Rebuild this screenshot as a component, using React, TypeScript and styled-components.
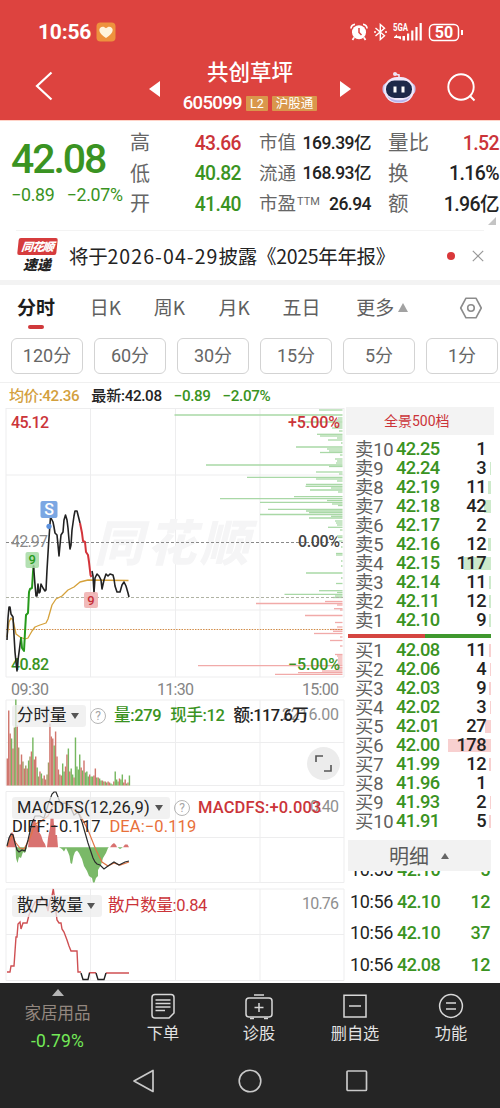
import React from "react";
import styled, { createGlobalStyle } from "styled-components";

const RED = "#cb3439";
const GREEN = "#3a9322";
const INK = "#232323";
const GREY = "#666";

const Global = createGlobalStyle`
  * { box-sizing: border-box; }
  body { margin: 0; background: #fff; overflow: hidden; }
`;

const Screen = styled.div`
  width: 500px;
  height: 1108px;
  display: flex;
  flex-direction: column;
  background: #fff;
  color: ${INK};
  font-family: Roboto, "Noto Sans CJK SC", sans-serif;
  overflow: hidden;
  white-space: nowrap;
`;

const Num = styled.span<{ $size: number; $color?: string; $weight?: number; $ls?: number }>`
  font-size: ${(p) => p.$size}px;
  line-height: 1;
  color: ${(p) => p.$color ?? "inherit"};
  font-weight: ${(p) => p.$weight ?? 500};
  letter-spacing: ${(p) => p.$ls ?? -0.03}em;
`;

/* ---------- header ---------- */
const Header = styled.header`
  height: 121px;
  flex: none;
  background: #dd433f;
  border-bottom: 1px solid #ffd3c8;
  color: #fff;
`;
const StatusBar = styled.div`
  height: 62px;
  padding: 2px 36px 0 38px;
  display: flex;
  align-items: center;
  justify-content: space-between;
`;
const StatusGroup = styled.div`
  display: flex;
  align-items: center;
  gap: 5px;
`;
const TitleBar = styled.div`
  height: 58px;
  display: grid;
  grid-template-columns: 149px 202px 149px;
`;
const TitleSide = styled.div<{ $pad: string; $gap?: number }>`
  display: flex;
  align-items: center;
  gap: ${(p) => p.$gap ?? 0}px;
  padding: ${(p) => p.$pad};
`;
const TitleCenter = styled.div`
  display: flex;
  align-items: center;
  justify-content: space-between;
  > svg { margin-top: -2px; }
`;
const TitleStack = styled.div`
  height: 58px;
  display: flex;
  flex-direction: column;
  align-items: center;
`;
const StockName = styled.h1`
  margin: 0;
  font-size: 21.5px;
  line-height: 22px;
  font-weight: 500;
`;
const CodeRow = styled.div`
  display: flex;
  align-items: center;
  gap: 3px;
  height: 20px;
  margin-top: 9px;
`;
const Badge = styled.span`
  height: 15px;
  padding: 0 4px;
  margin-left: 1px;
  background: #d9974c;
  border-radius: 1px;
  font-size: 12.5px;
  line-height: 15px;
`;

/* ---------- quote ---------- */
const Quote = styled.section`
  height: 109px;
  flex: none;
  display: grid;
  grid-template-columns: 130px 111px 18px 112px 17px 111px;
  position: relative;
`;
const PriceBlock = styled.div`
  padding: 18px 0 0 11px;
  color: ${GREEN};
`;
const Changes = styled.div`
  display: flex;
  gap: 12px;
  margin-top: 6px;
`;
const StatCol = styled.div`
  padding-top: 7px;
  display: flex;
  flex-direction: column;
`;
const StatRow = styled.div<{ $label: number }>`
  height: 30.5px;
  display: flex;
  align-items: center;
  justify-content: space-between;
  color: ${INK};
  > label {
    color: ${GREY};
    font-size: ${(p) => p.$label}px;
    line-height: 1;
  }
  sup { font-size: 11px; line-height: 1; vertical-align: 5px; margin-left: 1px; }
`;
const Corner = styled.i`
  position: absolute;
  right: 4px;
  bottom: 5px;
  border-left: 8px solid transparent;
  border-bottom: 8px solid #c4c4c4;
`;

/* ---------- news ---------- */
const News = styled.section`
  height: 50px;
  flex: none;
  margin: 0 16px;
  border-top: 1px solid #f3f3f3;
  display: flex;
  align-items: center;
`;
const NewsText = styled.p`
  margin: 0 0 0 11px;
  flex: 1;
  font-size: 19.5px;
  line-height: 24px;
  font-family: "Noto Sans CJK SC", sans-serif;
  letter-spacing: -0.3px;
  em { font-style: normal; letter-spacing: 1.1px; }
`;
const NewsLogo = styled.div`
  width: 42px;
  display: flex;
  flex-direction: column;
  align-items: center;
  font-family: "Noto Sans CJK SC", sans-serif;
  font-weight: 900;
  font-style: italic;
`;
const LogoTop = styled.span`
  width: 39px;
  height: 17px;
  background: #d63c3d;
  color: #fff;
  border-radius: 2px;
  transform: skewX(-6deg);
  font-size: 11.5px;
  line-height: 16px;
  letter-spacing: -0.8px;
  text-align: center;
`;
const LogoBottom = styled.span`
  font-size: 14px;
  line-height: 18px;
`;
const Dot = styled.i`
  width: 8px;
  height: 8px;
  border-radius: 50%;
  background: #d9383a;
  margin-right: 17px;
`;
const Band = styled.div`
  height: 5px;
  flex: none;
  background: #f3f3f3;
`;

/* ---------- tabs ---------- */
const Tabs = styled.nav`
  height: 53px;
  flex: none;
  display: flex;
  align-items: flex-start;
  padding: 12px 17px 0;
`;
const Tab = styled.div<{ $w: number; $on?: boolean }>`
  width: ${(p) => p.$w}px;
  font-size: 19px;
  line-height: 20px;
  font-weight: ${(p) => (p.$on ? 700 : 400)};
  color: ${(p) => (p.$on ? "#1d1d1d" : "#606060")};
  font-family: "Noto Sans CJK SC", sans-serif;
  &::after {
    content: "";
    display: ${(p) => (p.$on ? "block" : "none")};
    width: 16px;
    height: 4px;
    margin: 8px 0 0 11px;
    border-radius: 2px;
    background: #d0393b;
  }
`;
const Up = styled.i<{ $w: number; $h: number; $color: string }>`
  display: inline-block;
  border: ${(p) => p.$w / 2}px solid transparent;
  border-top: 0;
  border-bottom: ${(p) => p.$h}px solid ${(p) => p.$color};
`;
const MoreArrow = styled(Up)`
  margin-left: 4px;
  vertical-align: 3px;
`;
const Down = styled.i`
  border: 4.5px solid transparent;
  border-bottom: 0;
  border-top: 6px solid #555;
`;
const Periods = styled.div`
  height: 45px;
  flex: none;
  display: flex;
  gap: 11px;
  padding-left: 11px;
  border-bottom: 1px solid #f0f0f0;
`;
const Period = styled.button`
  flex: none;
  width: 72px;
  height: 36px;
  padding: 0;
  background: #fff;
  border: 1px solid #d3d3d3;
  border-radius: 6px;
  color: ${GREY};
  font-family: Roboto, "Noto Sans CJK SC", sans-serif;
  font-size: 18px;
  line-height: 34px;
`;
const Averages = styled.div`
  height: 24px;
  flex: none;
  display: flex;
  align-items: center;
  gap: 12px;
  padding: 3px 0 0 9px;
`;

/* ---------- charts ---------- */
const Body = styled.main`
  height: 576px;
  flex: none;
  display: grid;
  grid-template-columns: 346px 148px;
  overflow: hidden;
`;
const Charts = styled.div`
  display: flex;
  flex-direction: column;
`;
const Pane = styled.div<{ $h: number }>`
  height: ${(p) => p.$h}px;
  flex: none;
  position: relative;
  svg { display: block; }
`;
const Legend = styled.div<{ $top: number }>`
  position: absolute;
  left: 12px;
  top: ${(p) => p.$top}px;
  display: flex;
  align-items: center;
  font-size: 16.5px;
  line-height: 22px;
`;
const Chip = styled.span<{ $w: number; $ls?: number }>`
  width: ${(p) => p.$w}px;
  height: 22px;
  display: flex;
  align-items: center;
  justify-content: space-between;
  padding: 0 7px 0 5px;
  border-radius: 3px;
  background: rgba(236, 236, 236, 0.75);
  letter-spacing: ${(p) => p.$ls ?? 0}px;
`;
const Help = styled.span`
  width: 16px;
  height: 16px;
  border: 1px solid #b5b5b5;
  border-radius: 50%;
  color: #a5a5a5;
  font-size: 12px;
  line-height: 14px;
  text-align: center;
  margin: 0 8px 0 4px;
`;
const Item = styled.span<{ $color: string; $ml?: number; $ls?: number; $weight?: number }>`
  color: ${(p) => p.$color};
  margin-left: ${(p) => p.$ml ?? 0}px;
  letter-spacing: ${(p) => p.$ls ?? -0.35}px;
  font-size: 16.5px;
  font-weight: ${(p) => p.$weight ?? 500};
`;
const Expand = styled.button`
  position: absolute;
  right: 6px;
  top: 48px;
  width: 33px;
  height: 33px;
  padding: 0;
  border: 0;
  border-radius: 50%;
  background: #ececec;
  display: grid;
  place-items: center;
`;

/* ---------- order book ---------- */
const Side = styled.aside`
  display: flex;
  flex-direction: column;
  padding-left: 2px;
`;
const Panorama = styled.div`
  height: 28px;
  margin-left: -2px;
  background: #f3f3f3;
  color: ${RED};
  font-size: 14px;
  line-height: 28px;
  padding-left: 38px;
`;
const Book = styled.div<{ $top: number }>`
  padding: ${(p) => p.$top}px 3px 0 0;
`;
const Level = styled.div`
  height: 19px;
  display: grid;
  grid-template-columns: 41px 48px 1fr;
  align-items: center;
  padding-left: 7px;
`;
const LevelName = styled.span`
  color: #606060;
  font-size: 18.4px;
  line-height: 19px;
  letter-spacing: -0.2px;
`;
const Depth = styled.span<{ $w: number; $color: string }>`
  height: 13px;
  display: flex;
  align-items: center;
  justify-content: flex-end;
  padding-right: 5px;
  background: linear-gradient(${(p) => p.$color}, ${(p) => p.$color}) right / ${(p) => p.$w}px 100% no-repeat;
`;
const Ratio = styled.div`
  height: 4px;
  margin: 4px 3px 0 0;
  background: linear-gradient(90deg, #d54541 53.5%, #3f982e 53.5%);
`;
const DetailHead = styled.div`
  height: 31px;
  flex: none;
  margin: 9px 3px 0 0;
  background: #f2f2f2;
  display: flex;
  align-items: center;
  gap: 12px;
  padding-left: 41px;
  font-size: 20px;
  color: #5b5b5b;
`;
const Trades = styled.div`
  flex: 1;
  min-height: 0;
  overflow: hidden;
  margin-right: 3px;
`;
const TradeList = styled.div`
  margin-top: -16.5px;
`;
const Trade = styled.div`
  height: 31.5px;
  display: grid;
  grid-template-columns: 47px 45px 1fr;
  align-items: center;
  padding: 0 1px 0 2px;
  > :last-child { text-align: right; }
`;

/* ---------- footer ---------- */
const Footer = styled.footer`
  height: 125px;
  flex: none;
  background: #252525;
  color: #e2e2e2;
`;
const Actions = styled.div`
  height: 72px;
  display: grid;
  grid-template-columns: 115px repeat(4, 96px);
`;
const Sector = styled.div`
  display: flex;
  flex-direction: column;
  align-items: center;
  padding-top: 6px;
`;
const SectorName = styled.span`
  color: #93877f;
  font-size: 16.5px;
  line-height: 20px;
  margin: 8px 0 9px;
`;
const Action = styled.div`
  display: flex;
  flex-direction: column;
  align-items: center;
  font-size: 16.2px;
  line-height: 20px;
  gap: 4px;
  padding-top: 8px;
  svg { display: block; }
`;
const SystemNav = styled.div`
  height: 53px;
  display: grid;
  grid-template-columns: repeat(3, 106.5px);
  justify-content: center;
  justify-items: center;
  padding: 14px 0 0;
`;

type Pt = [number, number];
const path = (pts: Pt[]) => "M" + pts.map((p) => p.join(" ")).join("L");

const open: Pt[] = [[7, 640], [8, 618], [9, 607], [10, 607], [11, 614], [13, 617], [14, 635], [15, 652], [16, 662], [17, 671], [18, 660], [20, 645], [21, 637]];
const rise: Pt[] = [[21, 637], [22, 648], [24, 651], [25, 632], [26, 615], [28, 613], [29, 592], [30, 589], [32, 588], [33, 572], [33.5, 566]];
const mid: Pt[] = [[33.5, 565], [35, 585], [36, 596], [37, 596], [38, 584], [39, 593], [40, 592], [41, 584], [43, 588], [45, 591], [46, 590], [47, 570], [48.5, 545], [50, 524], [50.5, 517], [52, 520], [53, 522], [54, 527], [55, 533], [57, 535], [58, 545], [59, 556], [60, 545], [61, 535], [63, 532], [64, 520], [65.5, 515], [67, 520], [68, 528], [69, 540], [70, 549], [71, 545], [72, 530], [74, 516], [75, 511], [77, 511], [78, 515], [80, 523]];
const fall: Pt[] = [[80, 523], [82, 533], [83, 541], [85, 542], [86, 552], [88, 555], [89, 562], [90.5, 575], [91.5, 577]];
const tail: Pt[] = [[92, 571], [93, 576], [94, 593], [95, 578], [97, 574], [99, 576], [101, 580], [102, 589], [104, 580], [106, 574], [108, 576], [110, 574], [113, 575], [114, 579], [115, 586], [117, 592], [120, 592], [122, 585], [124, 582], [126, 586], [128, 593], [129, 597]];
const average: Pt[] = [[7, 637], [9, 622], [11, 618], [13, 620], [16, 634], [20, 637], [25, 639], [28, 638], [32, 631], [35, 627], [40, 625], [46, 623], [48, 619], [52, 605], [56, 599], [62, 596], [68, 590], [74, 587], [80, 582], [88, 580], [128.5, 580.5]];

/* resting orders: y position and left end of each bar */
const asks: Pt[] = [[410, 319], [415, 174.5], [418, 338], [420, 336], [422, 300], [424, 338], [426, 336], [428, 332], [431, 339], [434.3, 317], [436, 320], [438, 337], [440, 328], [443, 341], [447, 296], [449, 327], [451, 329], [452.5, 320], [455, 340], [459, 335], [461, 337], [463, 336], [465, 206], [466.5, 329], [472, 316], [474, 339], [477.3, 247], [479, 316], [481, 337], [484.5, 306], [486.3, 305.5], [488, 331], [490, 310], [492, 338], [496.7, 294], [498.7, 220], [500.5, 327], [502.3, 260], [504, 332], [505.5, 338], [509.3, 268], [511, 306], [512.7, 309], [514.5, 260], [516.3, 331], [518, 309], [521, 335], [523, 336], [525, 337], [527.3, 328], [530, 340], [536, 337], [537.5, 338], [541, 339], [547, 341], [553.5, 336], [555, 336], [561, 341], [566, 341], [573, 306], [578, 341], [583.5, 336], [590.7, 319], [592.5, 337], [594.3, 284.5], [596, 335], [597.5, 333]];
const bids: Pt[] = [[601.5, 325], [603.5, 256], [605, 337], [608.7, 334], [610, 340], [615.5, 305], [622.5, 335], [627, 337], [629.5, 330], [631.3, 333], [633.5, 314], [637, 340], [640.5, 330], [646, 340], [654.5, 335], [656, 337], [658, 338], [660, 337], [662, 338], [664, 337], [665.7, 198], [667.5, 337], [669, 338], [671, 322], [672.7, 298], [674.3, 275]];

const volumes = [27, 75, 52, 47, 37, 58, 86, 60, 38, 21, 31, 24, 17, 20, 17, 25, 29, 34, 48, 26, 29, 18, 9, 14, 12, 7, 10, 6, 11, 23, 62, 49, 47, 40, 54, 29, 16, 11, 10, 22, 14, 19, 31, 37, 14, 17, 11, 8, 48, 19, 16, 31, 18, 15, 25, 13, 14, 9, 11, 9, 9, 10, 17, 8, 8, 7, 5, 5, 4, 4, 3, 4, 3, 2, 1, 4, 14, 6, 4, 7, 6, 11, 3, 6, 2, 3, 10];
const volumeIsUp = "111010010110101001011001001100111011101001101001000010100010011010010101100100010011010";

const diff: Pt[] = [[7, 846], [9, 838], [11, 834], [13, 835], [15, 843], [17, 850], [19, 852], [22, 850], [25, 851], [28, 840], [32, 823], [35, 816], [40, 816], [44, 818], [48, 805], [52, 794], [54, 792], [56, 792], [58, 797], [61, 805], [65, 803], [70, 806], [74, 815], [78, 812], [82, 822], [88, 843], [93, 858], [95, 862], [97, 864], [100, 865], [104, 869], [108, 866], [114, 862], [119, 865], [125, 862], [129, 861]];
const dea: Pt[] = [[7, 847], [12, 836], [16, 843], [20, 848], [24, 849], [30, 838], [35, 824], [40, 822], [48, 816], [53, 805], [58, 802], [66, 802], [72, 808], [80, 815], [88, 830], [96, 850], [102, 862], [108, 866], [114, 863], [120, 865], [129, 862]];

function Grid({ top, bottom, lines }: { top: number; bottom: number; lines: number[] }) {
  return (
    <g stroke="#ededee" strokeWidth={1} fill="none">
      {[6, 90.5, 175.5, 260, 344].map((x) => (
        <line key={x} x1={x} x2={x} y1={top} y2={bottom} />
      ))}
      {lines.map((y) => (
        <line key={y} x1={6} x2={344} y1={y} y2={y} />
      ))}
    </g>
  );
}

function PriceChart() {
  const num = { fontSize: 16, fontWeight: 500 };
  return (
    <svg width="346" height="292" viewBox="0 407 346 292">
      <Grid top={408} bottom={677} lines={[408.5, 475, 610, 677]} />
      <text x="94" y="561" fontSize="49" fontWeight="900" fontStyle="italic" fill="#f5f5f6" textLength="155" fontFamily="Noto Sans CJK SC">同花顺</text>
      <g stroke="#a9d8a6" strokeWidth="1.3">
        {asks.map(([y, x]) => <line key={y} x1={x} x2={342.5} y1={y} y2={y} />)}
      </g>
      <g stroke="#f1aaa9" strokeWidth="1.3">
        {bids.map(([y, x]) => <line key={y} x1={x} x2={342.5} y1={y} y2={y} />)}
      </g>
      <line x1="6" x2="343" y1="542.5" y2="542.5" stroke="#888" strokeDasharray="3 2" />
      <line x1="6" x2="343" y1="597.5" y2="597.5" stroke="#b0b3a4" strokeDasharray="3 2" />
      <line x1="6" x2="343" y1="629.5" y2="629.5" stroke="#d08a45" strokeDasharray="1.5 1.2" />
      <text {...num} x="11" y="428" fill={RED} textLength="38">45.12</text>
      <text {...num} x="11" y="547" fill="#8a8a8a" textLength="37" fontWeight={400}>42.97</text>
      <text {...num} x="11" y="669.5" fill={GREEN} textLength="38">40.82</text>
      <text {...num} x="288" y="428" fill={RED} textLength="52">+5.00%</text>
      <text {...num} x="298" y="547" fill="#444" textLength="42">0.00%</text>
      <text {...num} x="288" y="669.5" fill={GREEN} textLength="52">−5.00%</text>
      <g fill="none" strokeWidth="1.6" strokeLinejoin="round">
        <path d={path(average)} stroke="#d5a13a" strokeWidth="1.3" />
        <path d={path(open)} stroke="#222" />
        <path d={path(rise)} stroke="#279a1c" strokeWidth="2" />
        <path d={path(mid)} stroke="#222" />
        <path d={path(fall)} stroke="#d3333a" strokeWidth="2" />
        <path d={path(tail)} stroke="#222" />
      </g>
      <rect x="40.5" y="501" width="17" height="17" rx="2" fill="#7ba7e3" />
      <circle cx="49" cy="526.3" r="2.6" fill="#5b91de" />
      <text x="49" y="515.3" fontSize="16" fill="#fff" textAnchor="middle" fontWeight="500">S</text>
      <rect x="25.5" y="552" width="13.5" height="16" rx="2" fill="#a6dba4" opacity=".85" />
      <text x="32.3" y="564.3" fontSize="13" fill="#279a1c" textAnchor="middle" fontWeight="500">9</text>
      <rect x="84" y="592" width="14" height="16" rx="2" fill="#f0b3b3" opacity=".9" />
      <text x="91" y="604.6" fontSize="13" fill="#c62f38" textAnchor="middle" fontWeight="500">9</text>
      <g fontSize="16" fill="#858585">
        <text x="11" y="695" textLength="38">09:30</text>
        <text x="157" y="695" textLength="37">11:30</text>
        <text x="302" y="695" textLength="37">15:00</text>
      </g>
    </svg>
  );
}

function VolumeChart() {
  return (
    <svg width="346" height="92" viewBox="0 699 346 92">
      <Grid top={700} bottom={785.5} lines={[700, 742.5, 785.5]} />
      <text x="282" y="720" fontSize="16" fill="#8f8f8f" textLength="57">2216.00</text>
      {volumes.map((v, i) => (
        <rect key={i} x={6.6 + i * 1.42} y={785.5 - v} width="1.42" height={v} fill={volumeIsUp[i] === "1" ? "#d0766d" : i < 38 && i % 3 ? "#a39a66" : "#76b760"} />
      ))}
    </svg>
  );
}

function MacdChart() {
  return (
    <svg width="346" height="97" viewBox="0 791 346 97">
      <Grid top={791.5} bottom={882.5} lines={[791.5, 837.5, 882.5]} />
      <text x="310" y="812" fontSize="16" fill="#8f8f8f" textLength="29">0.40</text>
      <path fill="#d97270" d="M7 847.3L8.5 840L10 835L12 832L14 835L15 842L16 847.3ZM28 847.3L29 838L31 830L33 821L35 819L36 824L38 826L39 832L41 835L43 841L45 844L46 847.3ZM47 847.3L48 838L50 828L50.5 818H53.5L54 825H55.5V835H57L58 847.3ZM110 847.3L112 844.5L114 843L116 845L117 847.3ZM123 847.3L125 844.5H127.5L129 847.3Z" />
      <path fill="#7ab968" d="M15.5 847.3L16 858L17.5 863L19 857L21 858L23 852L25 853L27 847.3ZM59 847.3L62 849L64 851.5L66 848L68 852L69.5 856L70.5 863L72 864L73.5 856L75 852L77 850.5L79 853L82 859L84 866L87 871L89 876L92 878L93 882.5H94.5L96 878L98 876V870L101 865L103 858L106 853L108 848L109 847.3ZM117.5 847.3L120 849L123 847.3Z" />
      <path d={path(dea)} fill="none" stroke="#e07647" strokeWidth="1.2" />
      <path d={path(diff)} fill="none" stroke="#2b2b2b" strokeWidth="1.2" />
    </svg>
  );
}

function RetailChart() {
  return (
    <svg width="346" height="95" viewBox="0 888 346 95">
      <Grid top={889} bottom={980.5} lines={[889, 934.5, 980.5]} />
      <text x="302" y="909" fontSize="16" fill="#8f8f8f" textLength="37">10.76</text>
      <g fill="none" strokeWidth="1.4">
        <path stroke="#cf5053" d="M7 972H10L11 966H14L16 937H17L18 924L20 922L21 929L23 923H27L29 915L32 909L35 902H40L41 899H45L48 911L50 900L52 896L53.3 889L54.5 898L56 912L57 920L59 923H61L62 929L64 932L67 940L69 946L71 951H77L78 972H81M89 973L90 972.7H96M106 973H129" />
        <path stroke="#222" d="M81 973L83 979.5H88L89.5 973M96 973L98 979.5H104L106 973" />
      </g>
    </svg>
  );
}

const sells: [number, string, number, number][] = [[10, "42.25", 1, 0], [9, "42.24", 3, 1], [8, "42.19", 11, 3], [7, "42.18", 42, 7], [6, "42.17", 2, 0], [5, "42.16", 12, 3], [4, "42.15", 117, 27], [3, "42.14", 11, 2], [2, "42.11", 12, 2.5], [1, "42.10", 9, 2]];
const buys: [number, string, number, number][] = [[1, "42.08", 11, 2.5], [2, "42.06", 4, 1], [3, "42.03", 9, 2], [4, "42.02", 3, 1], [5, "42.01", 27, 6], [6, "42.00", 178, 43], [7, "41.99", 12, 2.5], [8, "41.96", 1, 0], [9, "41.93", 2, 1], [10, "41.91", 5, 2]];
const trades: [string, number][] = [["42.10", 5], ["42.10", 12], ["42.10", 37], ["42.08", 12]];

function Levels({ side, rows, tint, top }: { side: string; rows: typeof sells; tint: string; top: number }) {
  return (
    <Book $top={top}>
      {rows.map(([n, price, qty, w]) => (
        <Level key={n}>
          <LevelName>{side}{n}</LevelName>
          <Num $size={18.3} $color={GREEN} $ls={-0.035}>{price}</Num>
          <Depth $w={w} $color={tint}><Num $size={18.3}>{qty}</Num></Depth>
        </Level>
      ))}
    </Book>
  );
}

export default function App() {
  return (
    <Screen>
      <Global />
      <Header>
        <StatusBar>
          <StatusGroup>
            <Num $size={21} $weight={700} $ls={-0.01}>10:56</Num>
            <svg width="20" height="20" viewBox="0 0 20 20">
              <rect x=".5" y=".5" width="19" height="19" rx="4" fill="#ee923e" />
              <path d="M10 16C5.8 13 3.3 10.8 3.3 8C3.3 4.6 7.6 3.4 10 6.3C12.4 3.4 16.7 4.6 16.7 8C16.7 10.8 14.2 13 10 16Z" fill="#fff4de" />
            </svg>
          </StatusGroup>
          <StatusGroup>
            <svg width="18" height="18" viewBox="0 0 18 18" fill="#fff">
              <circle cx="9" cy="9.3" r="7" />
              <path d="M1 5.5A4 4 0 0 1 5 1.3M17 5.5A4 4 0 0 0 13 1.3M4 14.5L2.5 17M14 14.5L15.5 17" stroke="#fff" strokeWidth="1.7" fill="none" />
              <path d="M9 5V9.5L11.5 12" stroke="#dd433f" strokeWidth="1.5" fill="none" />
            </svg>
            <svg width="15" height="18" viewBox="0 0 15 18" fill="none" stroke="#fff" strokeWidth="1.4">
              <path d="M2.5 5L11.5 12.7L7.3 16.5V1.5L11.5 5.2L2.5 13M1 9H3M12 9H14" />
            </svg>
            <svg width="30" height="20" viewBox="0 0 30 20" fill="#fff">
              <text x="0" y="9" fontSize="10" fontWeight="700" textLength="15" lengthAdjust="spacingAndGlyphs">5GA</text>
              <path d="M1 15L4 12.5V14.2H8V12.8L8 17.5L5 16H1ZM9.5 14H12V18.5H9.5ZM14 11.5H16.2V18.5H14ZM18.2 8.5H20.4V18.5H18.2ZM22.4 5H24.6V18.5H22.4ZM26.6 1H28.8V18.5H26.6Z" />
            </svg>
            <svg width="36" height="19" viewBox="0 0 36 19" fill="none" stroke="#fff">
              <rect x="1.5" y="1.5" width="29" height="16" rx="4.5" strokeWidth="1.5" />
              <path d="M34 7V12" strokeWidth="2" />
              <text x="16" y="15.2" fontSize="16" fontWeight="700" fill="#fff" stroke="none" textAnchor="middle">50</text>
            </svg>
          </StatusGroup>
        </StatusBar>
        <TitleBar>
          <TitleSide $pad="0 0 10px 34px">
            <svg width="19" height="30" viewBox="0 0 19 30" fill="none" stroke="#fff" strokeWidth="2.2">
              <path d="M17.5 1.5L3 15L17.5 28.5" />
            </svg>
          </TitleSide>
          <TitleCenter>
            <svg width="11" height="46" viewBox="0 0 11 46"><path d="M0 22L11 14V30Z" fill="#fff" /></svg>
            <TitleStack>
              <StockName>共创草坪</StockName>
              <CodeRow>
                <Num $size={18.5} $ls={-0.035}>605099</Num>
                <Badge>L2</Badge>
                <Badge>沪股通</Badge>
              </CodeRow>
            </TitleStack>
            <svg width="11" height="46" viewBox="0 0 11 46"><path d="M11 22L0 14V30Z" fill="#fff" /></svg>
          </TitleCenter>
          <TitleSide $pad="0 0 9px 31px" $gap={30}>
            <svg width="34" height="34" viewBox="0 0 34 34">
              <path d="M13.5 4.2L17 5V9" stroke="#efe6f8" strokeWidth="1.6" fill="none" />
              <circle cx="13" cy="4" r="2" fill="#eee4f5" />
              <rect x=".5" y="13" width="33" height="12" rx="5" fill="#c9c2ee" />
              <rect x="2" y="7" width="30" height="26" rx="13" fill="#f0e8fa" />
              <path d="M5 25C9 32 25 32 29 25C26 35 8 35 5 25Z" fill="#b9b5ec" />
              <rect x="4" y="10.5" width="26" height="17.5" rx="8.5" fill="#1e2949" />
              <path d="M13 16.5V22.5M21 16.5V22.5" stroke="#fff" strokeWidth="3" />
            </svg>
            <svg width="30" height="30" viewBox="0 0 30 30" fill="none" stroke="#fff" strokeWidth="1.9">
              <circle cx="15" cy="15" r="12.7" />
              <path d="M23.5 23.5L28.5 28.5" />
            </svg>
          </TitleSide>
        </TitleBar>
      </Header>

      <Quote>
        <PriceBlock>
          <Num $size={41} $ls={-0.05}>42.08</Num>
          <Changes>
            <Num $size={17.8} $weight={400} $ls={-0.015}>−0.89</Num>
            <Num $size={17.8} $weight={400} $ls={-0.015}>−2.07%</Num>
          </Changes>
        </PriceBlock>
        <StatCol>
          <StatRow $label={20}><label>高</label><Num $size={19.3} $color={RED}>43.66</Num></StatRow>
          <StatRow $label={20}><label>低</label><Num $size={19.3} $color={GREEN}>40.82</Num></StatRow>
          <StatRow $label={20}><label>开</label><Num $size={19.3} $color={GREEN}>41.40</Num></StatRow>
        </StatCol>
        <span />
        <StatCol>
          <StatRow $label={18.5}><label>市值</label><Num $size={17.5}>169.39亿</Num></StatRow>
          <StatRow $label={18.5}><label>流通</label><Num $size={17.5}>168.93亿</Num></StatRow>
          <StatRow $label={18.5}><label>市盈<sup>TTM</sup></label><Num $size={17.5}>26.94</Num></StatRow>
        </StatCol>
        <span />
        <StatCol>
          <StatRow $label={20.5}><label>量比</label><Num $size={19.5} $color={RED}>1.52</Num></StatRow>
          <StatRow $label={20.5}><label>换</label><Num $size={19.5}>1.16%</Num></StatRow>
          <StatRow $label={20.5}><label>额</label><Num $size={19.5}>1.96亿</Num></StatRow>
        </StatCol>
        <Corner />
      </Quote>

      <News>
        <NewsLogo>
          <LogoTop>同花顺</LogoTop>
          <LogoBottom>速递</LogoBottom>
        </NewsLogo>
        <NewsText>将于<em>2026-04-29</em>披露《2025年年报》</NewsText>
        <Dot />
        <svg width="12" height="12" viewBox="0 0 12 12" stroke="#999" strokeWidth="1.2"><path d="M.8 .8L11.2 11.2M11.2 .8L.8 11.2" /></svg>
      </News>
      <Band />

      <Tabs>
        <Tab $w={73} $on>分时</Tab>
        <Tab $w={64}>日K</Tab>
        <Tab $w={65}>周K</Tab>
        <Tab $w={64}>月K</Tab>
        <Tab $w={74}>五日</Tab>
        <Tab $w={103}>更多<MoreArrow $w={11} $h={9} $color="#a2a2a2" /></Tab>
        <svg width="24" height="22" viewBox="0 0 24 22" fill="none" stroke="#8c8c8c" strokeWidth="1.6">
          <path d="M7 1.2H17L22.3 11L17 20.8H7L1.7 11Z" strokeLinejoin="round" />
          <circle cx="12" cy="11" r="3.3" />
        </svg>
      </Tabs>
      <Periods>
        {["120分", "60分", "30分", "15分", "5分", "1分"].map((p) => <Period key={p}>{p}</Period>)}
      </Periods>
      <Averages>
        <Num $size={15.2} $color="#d3a03d" $ls={-0.023}>均价:42.36</Num>
        <Num $size={15.2} $ls={-0.023}>最新:42.08</Num>
        <Num $size={15.2} $color={GREEN} $ls={-0.023}>−0.89</Num>
        <Num $size={15.2} $color={GREEN} $ls={-0.023}>−2.07%</Num>
      </Averages>

      <Body>
        <Charts>
          <Pane $h={292}><PriceChart /></Pane>
          <Pane $h={92}>
            <VolumeChart />
            <Legend $top={6}>
              <Chip $w={74}>分时量<Down /></Chip>
              <Help>?</Help>
              <Item $color={GREEN}>量:279</Item>
              <Item $color={GREEN} $ml={9}>现手:12</Item>
              <Item $color={INK} $ml={9} $ls={-0.6}>额:117.6万</Item>
            </Legend>
            <Expand>
              <svg width="17" height="17" viewBox="0 0 17 17" fill="none" stroke="#555" strokeWidth="1.6"><path d="M1 7V1H8M16 10V16H9" /></svg>
            </Expand>
          </Pane>
          <Pane $h={97}>
            <MacdChart />
            <Legend $top={6}>
              <Chip $w={158} $ls={0.2}>MACDFS(12,26,9)<Down /></Chip>
              <Help>?</Help>
              <Item $color={RED} $ls={0.15}>MACDFS:+0.003</Item>
            </Legend>
            <Legend $top={25}>
              <Item $color={INK} $ls={0} $weight={400}>DIFF:−0.117</Item>
              <Item $color="#e8703a" $ml={9} $ls={0.1} $weight={400}>DEA:−0.119</Item>
            </Legend>
          </Pane>
          <Pane $h={95}>
            <RetailChart />
            <Legend $top={7}>
              <Chip $w={90}>散户数量<Down /></Chip>
              <Item $color={RED} $ml={6} $weight={400}>散户数量:0.84</Item>
            </Legend>
          </Pane>
        </Charts>
        <Side>
          <Panorama>全景500档</Panorama>
          <Levels side="卖" rows={sells} tint="#cdeacb" top={5} />
          <Ratio />
          <Levels side="买" rows={buys} tint="#f8d0d0" top={3} />
          <DetailHead>明细<Up $w={8} $h={6} $color="#666" /></DetailHead>
          <Trades>
            <TradeList>
              {trades.map(([price, qty], i) => (
                <Trade key={i}>
                  <Num $size={18} $weight={400} $ls={-0.02}>10:56</Num>
                  <Num $size={18} $color={GREEN}>{price}</Num>
                  <Num $size={18} $color={GREEN}>{qty}</Num>
                </Trade>
              ))}
            </TradeList>
          </Trades>
        </Side>
      </Body>

      <Footer>
        <Actions>
          <Sector>
            <Up $w={12} $h={7} $color="#b5b5b5" />
            <SectorName>家居用品</SectorName>
            <Num $size={17.5} $color="#74ea58" $weight={400} $ls={0.01}>-0.79%</Num>
          </Sector>
          <Action>
            <svg width="30" height="29" viewBox="0 0 30 29" fill="none" stroke="#d8d8d8" strokeWidth="1.5">
              <path d="M7 3.5H23Q26 3.5 26 6.5V22L21 27H7Q4 27 4 24V6.5Q4 3.5 7 3.5ZM7.5 9H22.5M7.5 12.5H22.5M7.5 16H22.5M7.5 19.5H17" />
            </svg>
            下单
          </Action>
          <Action>
            <svg width="30" height="29" viewBox="0 0 30 29" fill="none" stroke="#d8d8d8" strokeWidth="1.5">
              <rect x="2" y="7" width="26" height="19" rx="3" />
              <path d="M10 4H20M10.5 16.5H19.5M15 12V21M6 27.5H10M20 27.5H24" />
            </svg>
            诊股
          </Action>
          <Action>
            <svg width="30" height="29" viewBox="0 0 30 29" fill="none" stroke="#d8d8d8" strokeWidth="1.5">
              <path d="M4 4.3H26V26H4ZM9 15H21" />
            </svg>
            删自选
          </Action>
          <Action>
            <svg width="30" height="29" viewBox="0 0 30 29" fill="none" stroke="#d8d8d8" strokeWidth="1.5">
              <circle cx="15" cy="15" r="11.4" />
              <path d="M10 12H20M10 18H20" />
            </svg>
            功能
          </Action>
        </Actions>
        <SystemNav>
          <svg width="24" height="24" viewBox="0 0 24 24" fill="none" stroke="#c9c9c9" strokeWidth="1.7" strokeLinejoin="round"><path d="M21 1.5V22.5L2 12Z" /></svg>
          <svg width="24" height="24" viewBox="0 0 24 24" fill="none" stroke="#c9c9c9" strokeWidth="1.6"><circle cx="12" cy="12" r="10.8" /></svg>
          <svg width="24" height="24" viewBox="0 0 24 24" fill="none" stroke="#c9c9c9" strokeWidth="1.7"><rect x="2" y="2" width="19.5" height="19.5" rx="1" /></svg>
        </SystemNav>
      </Footer>
    </Screen>
  );
}
